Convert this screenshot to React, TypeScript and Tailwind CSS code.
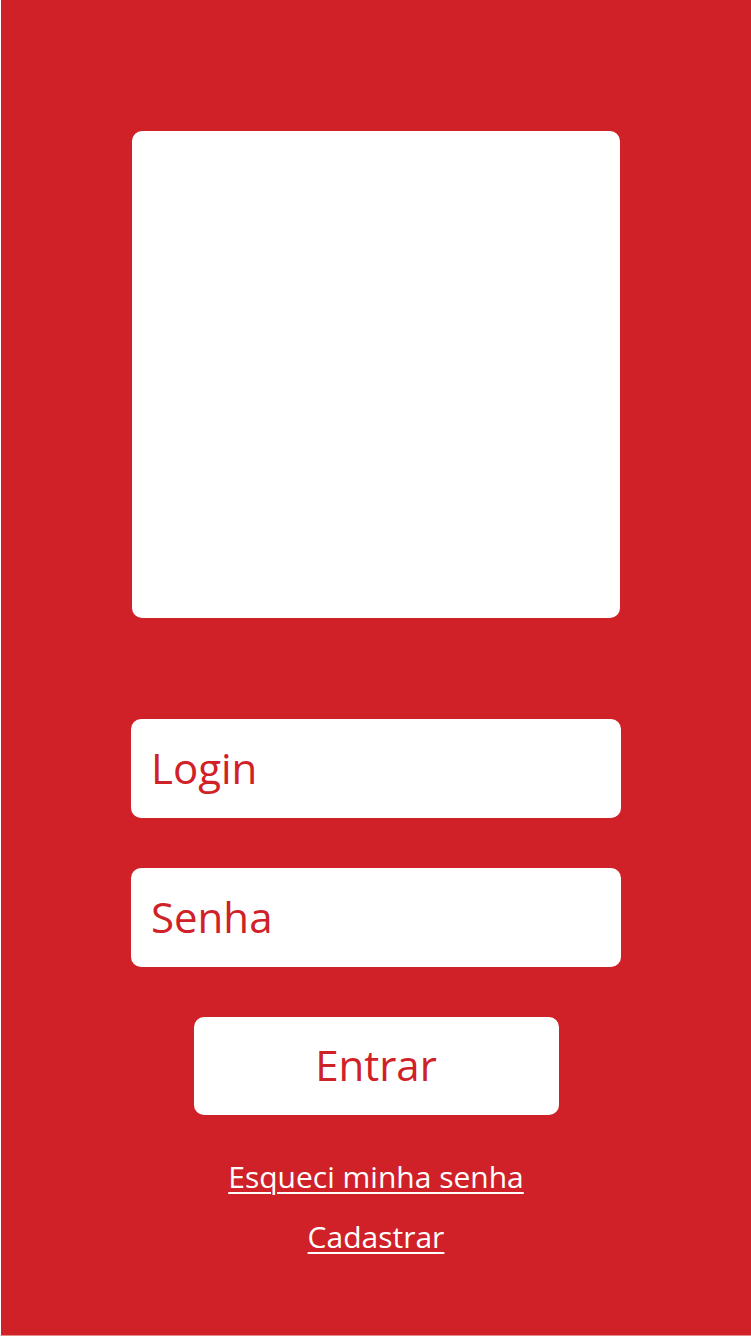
const LoginScreen = () => {
  return (
    <div
      className="flex h-[1336px] w-[751px] flex-col items-center border-l border-b border-l-white border-b-[#e58a8d] bg-[#cf2127] pt-[131px]"
      style={{ fontFamily: '"Open Sans", "Noto Sans", sans-serif' }}
    >
      {/* Logo placeholder */}
      <div className="h-[487px] w-[488px] rounded-[10px] bg-white" />

      {/* Fields */}
      <div className="mt-[101px] flex flex-col gap-[50px]">
        <div className="flex h-[99px] w-[490px] items-center rounded-[10px] bg-white pb-[2px] pl-[20px] text-[42px] text-[#cf2127]">
          Login
        </div>
        <div className="flex h-[99px] w-[490px] items-center rounded-[10px] bg-white pb-[2px] pl-[20px] text-[42px] text-[#cf2127]">
          Senha
        </div>
      </div>

      <button className="mt-[50px] flex h-[98px] w-[365px] items-center justify-center rounded-[10px] bg-white pb-[4px] text-[42px] text-[#cf2127]">
        Entrar
      </button>

      {/* Links */}
      <div className="mt-[39px] flex flex-col items-center gap-[14px] text-[30px] leading-[46px] text-white">
        <a className="underline decoration-2 underline-offset-[4px]">Esqueci minha senha</a>
        <a className="underline decoration-2 underline-offset-[4px]">Cadastrar</a>
      </div>
    </div>
  );
};

export default function App() {
  return <LoginScreen />;
}
